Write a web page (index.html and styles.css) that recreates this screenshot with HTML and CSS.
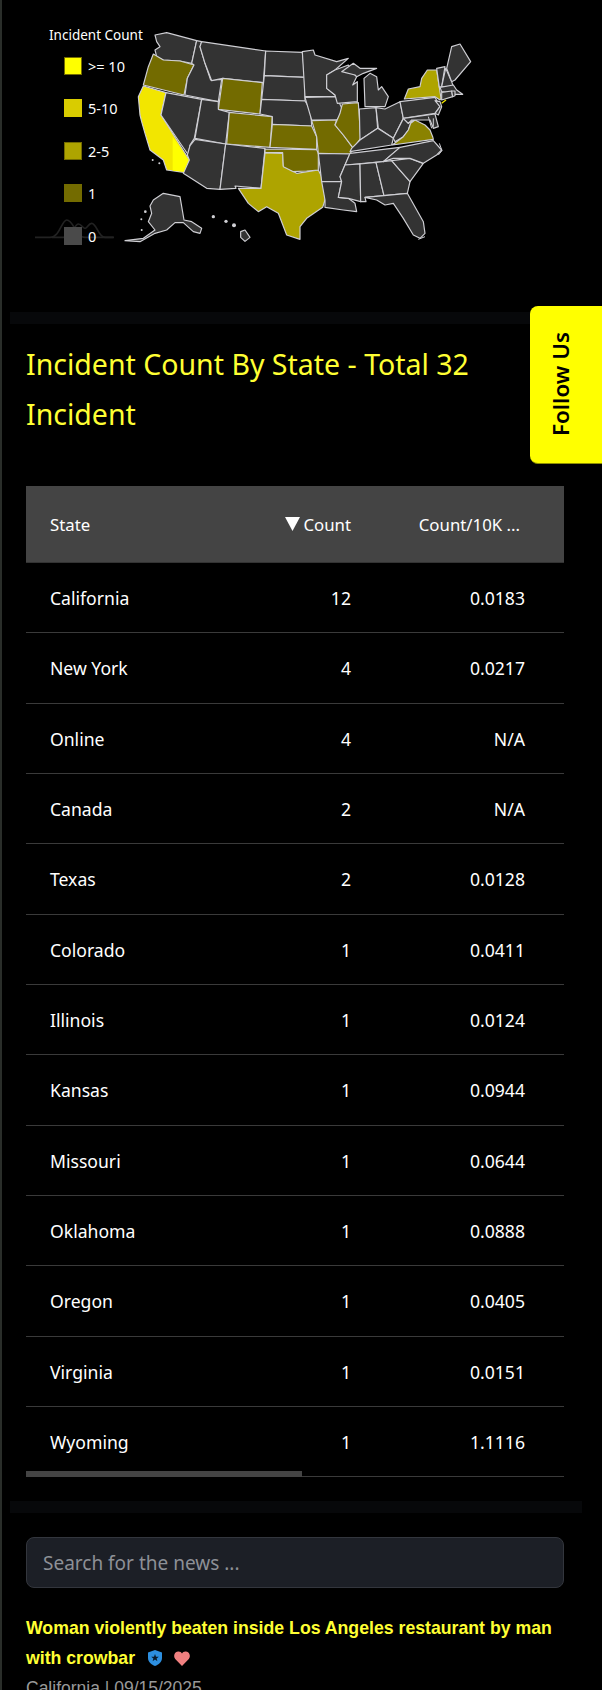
FILE: index.html
```html
<!DOCTYPE html>
<html lang="en">
<head>
<meta charset="utf-8">
<title>Incident Count By State</title>
<link rel="stylesheet" href="styles.css">
</head>
<body>
<div class="page">
  <section class="map-panel">
    <svg class="map" viewBox="0 0 1806 942" aria-label="US map of incidents">
      <g class="spark">
        <path d="M105 712H150C180 712 185 660 200 660C222 660 225 712 255 712H340"/>
        <path d="M155 712H190C210 712 225 672 235 672C245 672 248 685 255 685C262 685 265 670 275 670C290 670 295 712 315 712H342"/>
      </g>
      <g class="states">
        <path d="M465 105L500 98L590 122L575 190L540 183L490 180L470 170L465 150L480 140L470 125Z"/>
        <path class="c1" d="M460 162L490 180L540 183L582 195L562 235L552 285L430 255L445 200Z"/>
        <path class="c10" d="M430 258L498 278L483 345L568 480L552 517L500 510L490 480L450 450L435 400L425 365L420 345L415 290Z"/>
        <path d="M590 122L605 125L600 140L615 190L632 240L665 238L655 305L555 285L562 235L582 195L575 190Z"/>
        <path d="M498 278L605 298L583 415L570 435L565 465L483 345Z"/>
        <path d="M605 125L797 153L790 248L668 235L635 242L615 190L600 140Z"/>
        <path class="c1" d="M668 235L787 248L780 342L655 328Z"/>
        <path d="M605 298L655 305L655 328L688 337L677 432L585 415Z"/>
        <path class="c1" d="M688 337L817 350L810 442L680 432Z"/>
        <path d="M585 418L677 432L660 568L620 565L550 520L568 480L562 465L570 437Z"/>
        <path d="M677 432L795 445L783 565L705 558L708 565L660 568Z"/>
        <path d="M797 153L907 157L915 232L793 227Z"/>
        <path d="M793 227L915 232L915 303L785 298Z"/>
        <path d="M785 298L915 303L932 330L935 378L817 373L817 350L780 342Z"/>
        <path class="c1" d="M817 373L935 378L950 410L950 448L810 442Z"/>
        <path class="c5" d="M795 458L848 460L850 497L890 520L955 510L970 540L975 600L968 622L920 655L900 680L900 718L860 705L835 640L800 620L775 635L745 610L715 565L783 565Z"/>
        <path class="c1" d="M795 447L950 449L955 460L955 510L920 513L880 515L850 500L848 458L795 458Z"/>
        <path d="M907 155L940 150L945 165L1010 185L1045 175L1005 210L980 225L980 265L1005 285L1010 290L915 290Z"/>
        <path d="M915 292L1010 290L1030 335L1010 360L935 360Z"/>
        <path class="c1" d="M935 362L1010 360L1005 375L1030 405L1060 445L1050 462L955 460L950 410Z"/>
        <path d="M955 460L1050 462L1035 495L1020 530L1025 545L965 545Z"/>
        <path d="M965 545L1025 545L1015 592L1045 595L1065 610L1070 635L1030 630L975 622L975 600Z"/>
        <path d="M980 225L1005 210L1045 195L1065 225L1070 230L1058 255L1072 245L1072 305L1012 310L1005 285L980 265Z"/>
        <path class="c1" d="M1027 312L1075 308L1082 415L1060 445L1030 405L1005 375L1020 340Z"/>
        <path d="M1095 320L1092 235L1110 220L1130 230L1135 270L1145 260L1165 290L1155 320Z"/>
        <path d="M1025 215L1060 190L1080 205L1130 205L1090 220L1070 230L1065 225Z"/>
        <path d="M1078 327L1128 323L1133 385L1080 420Z"/>
        <path d="M1128 323L1155 327L1200 305L1210 355L1180 415L1135 385Z"/>
        <path d="M1055 445L1080 420L1133 385L1180 415L1175 435L1050 455Z"/>
        <path d="M1035 495L1050 460L1200 442L1150 485Z"/>
        <path d="M1035 495L1080 492L1082 605L1045 595L1015 592L1025 545L1020 530Z"/>
        <path d="M1080 492L1128 487L1152 587L1095 592L1098 605L1082 605Z"/>
        <path d="M1128 487L1175 482L1230 545L1222 580L1152 587Z"/>
        <path d="M1095 592L1152 587L1222 580L1270 665L1275 700L1260 715L1240 705L1210 655L1180 610L1155 615L1130 600Z"/>
        <path d="M1175 482L1230 475L1270 490L1230 545L1195 505Z"/>
        <path d="M1150 485L1200 442L1300 422L1325 450L1310 465L1270 490L1230 475L1180 475Z"/>
        <path d="M1180 415L1208 360L1210 355L1225 370L1245 358L1232 370L1225 390L1210 410L1185 425Z"/>
        <path class="cv" d="M1177 435L1210 410L1225 390L1232 370L1245 360L1275 375L1290 390L1298 410L1300 418Z"/>
        <path d="M1200 305L1305 292L1320 320L1305 340L1210 355Z"/>
        <path d="M1210 355L1305 342L1315 380L1300 385L1290 360L1260 360L1235 360L1225 370Z"/>
        <path class="c5" d="M1213 297L1225 267L1260 260L1265 235L1282 210L1310 210L1323 295L1320 300L1305 290Z"/>
        <path d="M1305 302L1320 305L1325 320L1315 345L1305 340L1320 320Z"/>
        <path d="M1310 205L1335 200L1325 260L1318 262Z"/>
        <path d="M1337 205L1355 245L1360 260L1325 260Z"/>
        <path d="M1340 205L1355 140L1380 132L1412 185L1365 240L1355 245Z"/>
        <path d="M1320 262L1360 255L1370 270L1388 283L1365 283L1325 275Z"/>
        <path d="M1325 277L1355 273L1358 290L1325 300Z"/>
        <path d="M1355 273L1365 273L1365 287L1358 290Z"/>
        <path d="M460 600L490 580L540 590L552 660L575 665L605 685L600 700L580 695L550 668L525 668L500 690L465 700L420 725L375 722L430 715L465 690L445 665L455 640L450 618Z"/>
        <path d="M722 695L735 690L750 712L735 724L722 712Z"/>
      </g>
      <path class="c10b" d="M518 410L566 480L551 515L518 512Z"/>
      <path class="isle-y" d="M1325 310L1338 300"/>
      <g class="coast">
        <path d="M1285 350L1295 385M1300 355L1300 380M1318 430L1326 452L1315 465M1255 718L1275 710"/>
      </g>
      <g class="isles">
        <circle cx="640" cy="650" r="5"/><circle cx="678" cy="664" r="5"/><circle cx="702" cy="676" r="6"/>
        <circle cx="436" cy="635" r="4"/><circle cx="424" cy="658" r="3"/><circle cx="425" cy="690" r="3"/>
        <circle cx="458" cy="480" r="3"/><circle cx="478" cy="490" r="3"/>
      </g>
    </svg>
    <div class="legend">
      <div class="legend-title">Incident Count</div>
      <div class="legend-row"><span class="swatch s10"></span>&gt;= 10</div>
      <div class="legend-row"><span class="swatch s5"></span>5-10</div>
      <div class="legend-row"><span class="swatch s2"></span>2-5</div>
      <div class="legend-row"><span class="swatch s1"></span>1</div>
      <div class="legend-row"><span class="swatch s0"></span>0</div>
    </div>
  </section>
  <div class="divider"></div>
  <section class="stats">
    <h2 class="title">Incident Count By State - Total 32 Incident</h2>
    <div class="table">
      <div class="row head">
        <span>State</span>
        <span class="num sort"><svg class="tri" viewBox="0 0 14 13"><path d="M0 0H14L7 13Z"/></svg>Count</span>
        <span class="num third">Count/10K ...</span>
      </div>
      <div class="row"><span>California</span><span class="num">12</span><span class="num">0.0183</span></div>
      <div class="row"><span>New York</span><span class="num">4</span><span class="num">0.0217</span></div>
      <div class="row"><span>Online</span><span class="num">4</span><span class="num">N/A</span></div>
      <div class="row"><span>Canada</span><span class="num">2</span><span class="num">N/A</span></div>
      <div class="row"><span>Texas</span><span class="num">2</span><span class="num">0.0128</span></div>
      <div class="row"><span>Colorado</span><span class="num">1</span><span class="num">0.0411</span></div>
      <div class="row"><span>Illinois</span><span class="num">1</span><span class="num">0.0124</span></div>
      <div class="row"><span>Kansas</span><span class="num">1</span><span class="num">0.0944</span></div>
      <div class="row"><span>Missouri</span><span class="num">1</span><span class="num">0.0644</span></div>
      <div class="row"><span>Oklahoma</span><span class="num">1</span><span class="num">0.0888</span></div>
      <div class="row"><span>Oregon</span><span class="num">1</span><span class="num">0.0405</span></div>
      <div class="row"><span>Virginia</span><span class="num">1</span><span class="num">0.0151</span></div>
      <div class="row"><span>Wyoming</span><span class="num">1</span><span class="num">1.1116</span></div>
      <div class="scroll-thumb"></div>
    </div>
  </section>
  <div class="divider lower"></div>
  <section class="news">
    <input class="search" type="text" placeholder="Search for the news ...">
    <h3 class="headline">Woman violently beaten inside Los Angeles restaurant by man with crowbar
      <svg class="shield" viewBox="0 0 14 16"><path class="shield-body" d="M7 0L14 2.5V8C14 12 10.5 14.800 7 16C3.500 14.800 0 12 0 8V2.500Z"/><path class="shield-star" d="M7 4L8 6.700L10.800 6.800L8.600 8.500L9.400 11.200L7 9.600L4.600 11.200L5.400 8.500L3.200 6.800L6 6.700Z"/></svg>
      <svg class="heart" viewBox="0 0 16 15"><path d="M8 15L1.200 8C-.8 5.600 0 1 4 .5C6 .3 7.300 1.300 8 2.500C8.700 1.300 10 .3 12 .5C16 1 16.800 5.600 14.800 8Z"/></svg>
    </h3>
    <p class="meta">California | 09/15/2025</p>
  </section>
  <a class="follow"><span>Follow Us</span></a>
</div>
</body>
</html>
```
FILE: styles.css
```css
* { box-sizing: border-box; }
html, body { margin: 0; padding: 0; background: #000; }
.page {
  position: relative;
  width: 602px;
  height: 1690px;
  overflow: hidden;
  border-left: 2px solid #2a2e2a;
  background: #000;
  color: #fff;
  font-family: "Noto Sans", sans-serif;
}
.map-panel { position: relative; height: 312px; }
.map { display: block; width: 602px; height: 314px; margin-left: -2px; }
.spark path { fill: none; stroke: #222; stroke-width: 5; }
.states path { fill: #333; stroke: #cfcfd4; stroke-width: 3.500; stroke-linejoin: round; }
.states .c1 { fill: #736b00; }
.states .c5 { fill: #aea400; }
.states .c10 { fill: #f2e600; }
.states .cv { fill: #8a8200; }
.c10b { fill: #ff0; }
.isle-y { stroke: #f2e600; stroke-width: 4; }
.coast path { fill: none; stroke: #cfcfd4; stroke-width: 3; }
.isles circle { fill: #cfcfd4; }
.legend {
  position: absolute;
  left: 47px;
  top: 26px;
  font-size: 13.500px;
  line-height: 18px;
}
.legend-title { margin-bottom: 13px; }
.legend-row {
  display: flex;
  align-items: center;
  gap: 6px;
  height: 18px;
  margin: 0 0 24.400px 15px;
  font-size: 14.500px;
}
.swatch { width: 18px; height: 18px; border: 1px solid transparent; }
.s10 { background: #ff0; border-color: #736b00; }
.s5 { background: #d9cc00; }
.s2 { background: #aea400; border-color: #736b00; }
.s1 { background: #736b00; }
.s0 { background: #4a4a4a; }
.divider { height: 12px; margin-left: 8px; background: #07080a; }
.divider.lower { margin-right: 20px; }
.stats { padding: 0 36px 0 24px; }
.title {
  margin: 15px 0 0;
  height: 147px;
  padding-right: 50px;
  font-size: 28.500px;
  font-weight: 400;
  line-height: 50px;
  color: #ffff33;
}
.table { position: relative; width: 538px; }
.row {
  display: grid;
  grid-template-columns: 1fr 90px 174px;
  align-items: center;
  height: 70.330px;
  padding: 1px 39px 0 24px;
  font-size: 17.600px;
  border-bottom: 1px solid #3a3a3a;
}
.row.head {
  height: 77px;
  background: #444;
  font-size: 16.800px;
  border-bottom: 1px solid #333;
}
.num { text-align: right; }
.tri { width: 15px; height: 14px; margin-right: 3px; fill: #fff; vertical-align: 0; }
.third { padding-right: 5px; }
.scroll-thumb {
  position: absolute;
  left: 0;
  bottom: 0;
  width: 276px;
  height: 6px;
  background: #444;
}
.lower { margin-top: 24px; }
.news { padding: 24px 38px 0 24px; }
.search {
  display: block;
  width: 538px;
  height: 51px;
  padding: 0 16px;
  border: 1px solid #33363d;
  border-radius: 8px;
  background: #1c1f26;
  color: #fff;
  font: 19px "Noto Sans", sans-serif;
}
.search::placeholder { color: #8d9096; opacity: 1; }
.headline {
  margin: 25px 0 0;
  font: 700 17.700px/30px "Liberation Sans", sans-serif;
  color: #ffff33;
}
.shield { width: 14px; height: 16px; margin-left: 8px; vertical-align: -2px; }
.shield-body { fill: #2d8fe0; }
.shield-star { fill: #0a1a2a; }
.heart { width: 16px; height: 15px; margin-left: 7px; vertical-align: -2px; fill: #f08080; }
.meta {
  margin: 3px 0 0;
  font: 17.500px/24px "Liberation Sans", sans-serif;
  color: #999;
}
.follow {
  position: absolute;
  right: 0;
  top: 306px;
  width: 72px;
  height: 158px;
  display: flex;
  align-items: center;
  padding-left: 15px;
  background: #ff0;
  border-bottom: 1px solid #8f8f00;
  border-radius: 8px 0 0 8px;
  color: #000;
  font-size: 22.400px;
  font-weight: 600;
}
.follow span { writing-mode: vertical-rl; transform: rotate(180deg); }
```
